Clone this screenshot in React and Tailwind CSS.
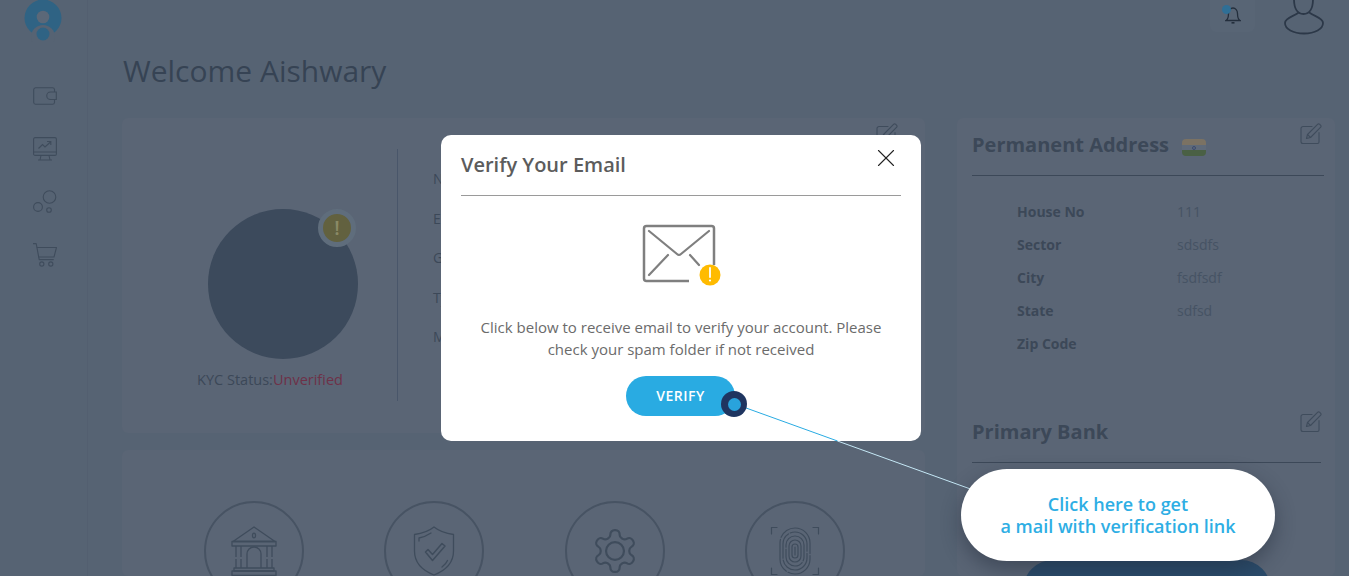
import { X } from 'lucide-react';

const addressRows = [
  ['House No', '111'],
  ['Sector', 'sdsdfs'],
  ['City', 'fsdfsdf'],
  ['State', 'sdfsd'],
  ['Zip Code', ''],
];

const profileLabels = ['Name', 'Email', 'Gender', 'Type', 'Mobile'];

const EditIcon = () => (
  <svg width="22" height="22" viewBox="0 0 22 22" fill="none" stroke="#3f4c5c" strokeWidth="1.1" strokeLinecap="round" strokeLinejoin="round">
    <path d="M12 3.5H3a2 2 0 0 0-2 2V18.5a2 2 0 0 0 2 2h14.5a1.5 1.5 0 0 0 1.5-1.5V9.5" />
    <path d="M6.5 15.5l1-4L17.8 1.2a1.2 1.2 0 0 1 1.7 0l1.2 1.2a1.2 1.2 0 0 1 0 1.7L10.5 14.5z" />
    <path d="M7.5 11.5l3 3" />
  </svg>
);

const WalletIcon = () => (
  <svg width="24" height="18" viewBox="0 0 24 18" fill="none" stroke="#3f4c5c" strokeWidth="1.1">
    <path d="M21.5 5V2.5A2 2 0 0 0 19.5.7H2.5A2 2 0 0 0 .7 2.5v13a2 2 0 0 0 1.8 1.8h17a2 2 0 0 0 2-1.8V12.500" />
    <path d="M23.300 5h-5.800a3.700 3.700 0 0 0 0 7.500h5.800z" />
  </svg>
);

const MonitorIcon = () => (
  <svg width="24" height="24" viewBox="0 0 24 24" fill="none" stroke="#3f4c5c" strokeWidth="1.1">
    <rect x=".6" y=".6" width="22.800" height="17.800" rx="1.500" />
    <path d="M.6 15h22.800M8 18.500l-1 4.500h10l-1-4.500M5 23h14" />
    <path d="M5.500 11.500l4-4 2.500 2.500 5.500-5M14 4.500h3.800v3.500" />
  </svg>
);

const BubblesIcon = () => (
  <svg width="24" height="24" viewBox="0 0 24 24" fill="none" stroke="#3f4c5c" strokeWidth="1.1">
    <circle cx="16.500" cy="7" r="6.300" />
    <circle cx="5" cy="17" r="4.400" />
    <circle cx="16" cy="20" r="2.300" />
  </svg>
);

const CartIcon = () => (
  <svg width="24" height="24" viewBox="0 0 24 24" fill="none" stroke="#3f4c5c" strokeWidth="1.1" strokeLinejoin="round">
    <path d="M0 .6h3.200l3 16h14.500" />
    <path d="M3.800 4.500H23.500l-2.500 9.500H5.700" />
    <circle cx="8.800" cy="21" r="2.100" />
    <circle cx="17.800" cy="21" r="2.100" />
  </svg>
);

const BankIcon = () => (
  <svg width="46" height="50" viewBox="0 0 46 50" fill="none" stroke="#3f4c5c" strokeWidth="1.300" strokeLinejoin="round">
    <path d="M23 1L2 15.500h42z" />
    <ellipse cx="23" cy="9.500" rx="1.500" ry="2.300" />
    <rect x="1" y="15.500" width="44" height="4.500" />
    <path d="M5 20v22M10 20v22M36 20v22M41 20v22" strokeDasharray="11 2 9" />
    <path d="M16 42V28a7 7 0 0 1 14 0v14" />
    <rect x="3" y="42" width="40" height="3" />
    <rect x="1" y="45" width="44" height="4.500" />
  </svg>
);

const ShieldIcon = () => (
  <svg width="42" height="50" viewBox="0 0 42 50" fill="none" stroke="#3f4c5c" strokeWidth="1.300" strokeLinecap="round" strokeLinejoin="round">
    <path d="M21 1c5 4 12 6.500 19.500 7.500V25c0 12-8 19.500-19.500 24C9.500 44.500 1.500 37 1.500 25V8.500C9 7.500 16 5 21 1z" />
    <path d="M6 12v3M6 12c5-1 9-3 12-5M29 41c2.500-2 4.500-4 5.500-6.500" />
    <path d="M12.500 26l2.500-2.500 4.500 5L29 17.500l3 2.500-12.500 14.500z" strokeWidth="1.500" />
  </svg>
);

const GearIcon = () => (
  <svg width="50" height="50" viewBox="0 0 24 24" fill="none" stroke="#3f4c5c" strokeWidth="1.050" strokeLinecap="round" strokeLinejoin="round">
    <path d="M12.220 2h-.44a2 2 0 0 0-2 2v.18a2 2 0 0 1-1 1.730l-.43.250a2 2 0 0 1-2 0l-.150-.080a2 2 0 0 0-2.730.730l-.220.380a2 2 0 0 0 .730 2.730l.150.100a2 2 0 0 1 1 1.720v.510a2 2 0 0 1-1 1.740l-.150.090a2 2 0 0 0-.730 2.730l.220.380a2 2 0 0 0 2.730.730l.150-.080a2 2 0 0 1 2 0l.430.250a2 2 0 0 1 1 1.730V20a2 2 0 0 0 2 2h.44a2 2 0 0 0 2-2v-.18a2 2 0 0 1 1-1.730l.430-.250a2 2 0 0 1 2 0l.150.080a2 2 0 0 0 2.730-.730l.220-.390a2 2 0 0 0-.730-2.730l-.150-.080a2 2 0 0 1-1-1.740v-.500a2 2 0 0 1 1-1.740l.150-.090a2 2 0 0 0 .730-2.730l-.220-.380a2 2 0 0 0-2.730-.730l-.150.080a2 2 0 0 1-2 0l-.430-.250a2 2 0 0 1-1-1.730V4a2 2 0 0 0-2-2z" />
    <circle cx="12" cy="12" r="4.300" />
  </svg>
);

const FingerprintIcon = () => (
  <svg width="50" height="50" viewBox="0 0 50 50" fill="none" stroke="#3f4c5c" strokeWidth="1.200" strokeLinecap="round">
    <path d="M7 1.500H1.500V8M43 1.500h5.500V8M7 48.500H1.500V42M43 48.500h5.500V42" />
    <rect x="10" y="2" width="30" height="46" rx="15" strokeDasharray="34 2" />
    <rect x="13" y="6" width="24" height="38" rx="12" strokeDasharray="26 2 40 2" />
    <rect x="16" y="10" width="18" height="30" rx="9" strokeDasharray="30 2" />
    <rect x="19" y="14" width="12" height="22" rx="6" />
    <rect x="22" y="18" width="6" height="14" rx="3" />
    <path d="M25 21v8" />
  </svg>
);

const MailWarningIcon = () => (
  <svg width="82" height="66" viewBox="0 0 82 66" fill="none">
    <path d="M49 58H6.500A2.500 2.500 0 0 1 4 55.500V5.500A2.500 2.500 0 0 1 6.500 3h65A2.500 2.500 0 0 1 74 5.500V42" stroke="#7f7f7f" strokeWidth="2.500" />
    <path d="M9 8l28 23a3 3 0 0 0 4 0L69 8M9 52l19-20M50 32l9 10" stroke="#7f7f7f" strokeWidth="2.200" strokeLinecap="round" />
    <circle cx="70" cy="52" r="10.500" fill="#ffbb00" />
    <path d="M70 45v9" stroke="#fff" strokeWidth="1.800" strokeLinecap="round" />
    <circle cx="70" cy="57.500" r="1.100" fill="#fff" />
  </svg>
);

const LogoIcon = () => (
  <svg className="-ml-[1px] shrink-0" width="38" height="42" viewBox="0 0 38 42">
    <circle cx="19" cy="18" r="18.500" fill="#2f6384" />
    <circle cx="19" cy="17" r="6.300" fill="#5b6878" />
    <circle cx="19" cy="37" r="12" fill="#566373" />
    <circle cx="19" cy="34" r="6.500" fill="#2f6384" />
  </svg>
);

const IndiaFlag = () => (
  <span className="flex h-[17px] w-[24px] flex-col overflow-hidden rounded-[4px]">
    <span className="h-[6px] bg-[#7b7263]" />
    <span className="flex h-[5px] items-center justify-center bg-[#5f6a79]">
      <span className="h-[4px] w-[4px] rounded-full border border-[#3a4a70]" />
    </span>
    <span className="h-[6px] bg-[#4a6044]" />
  </span>
);

const IconCircle = ({ children }) => (
  <div className="flex h-[100px] w-[100px] shrink-0 items-center justify-center rounded-full border-2 border-[#475363]">
    {children}
  </div>
);

const App = () => {
  return (
    <div className="relative flex h-[576px] w-[1349px] overflow-hidden bg-[#566373] font-['Open_Sans',sans-serif] text-[#3c4858]">
      {/* sidebar */}
      <aside className="flex w-[88px] shrink-0 flex-col items-center border-r border-[#535f70] bg-[#566373]">
        <LogoIcon />
        <div className="mt-[42px] flex flex-col items-center gap-[29px] pl-[2px]">
          <span className="flex h-[24px] items-center"><WalletIcon /></span>
          <span className="flex h-[24px] items-center"><MonitorIcon /></span>
          <span className="flex h-[24px] items-center"><BubblesIcon /></span>
          <span className="flex h-[24px] items-center"><CartIcon /></span>
        </div>
      </aside>

      {/* page */}
      <main className="flex min-w-0 flex-1 flex-col">
        <header className="flex h-[36px] justify-end gap-[29px] pr-[25px]">
          <div className="flex h-[32px] w-[45px] items-start justify-center rounded-b-md bg-[#586575] pt-[5px]">
            <span className="relative">
              <svg width="16" height="19" viewBox="0 0 16 19" fill="none" stroke="#232e3c" strokeWidth="1.300">
                <path d="M1 15.500c2.500-1.500 2.500-4 2.500-7a4.500 5.500 0 0 1 9 0c0 3 0 5.500 2.500 7z" />
                <path d="M6.500 17.800h3" strokeWidth="1.600" />
              </svg>
              <span className="absolute -left-[3px] top-0 h-[9px] w-[9px] rounded-full bg-[#2f6f96]" />
            </span>
          </div>
          <svg width="40" height="36" viewBox="0 0 40 36" fill="none" stroke="#2c3848" strokeWidth="1.800">
            <path d="M10 -1C10 8 13 14 19.500 14S29 8 29 -1" />
            <path d="M15 12C12 16 1 17 1 23 1 29 9 33.500 20 33.500S39 29 39 23C39 17 28 16 25 12" />
          </svg>
        </header>

        <h1 className="ml-[35px] mt-[16px] text-[30px] leading-[38px] text-[#364354]">Welcome Aishwary</h1>

        <div className="ml-[34px] mt-[28px] flex gap-[32px]">
          <div className="flex w-[803px] shrink-0 flex-col gap-[17px]">
            {/* profile card */}
            <section className="relative flex h-[315px] rounded-md bg-[#5a6575] pl-[31px]">
              <div className="mt-[31px] flex h-[252px] w-[245px] flex-col items-center border-r border-[#49566a] pl-[16px]">
                <div className="relative mt-[60px] h-[150px] w-[150px] rounded-full bg-[#3c4a5c]">
                  <span className="absolute left-[110px] top-0 flex h-[38px] w-[38px] items-center justify-center rounded-full border-[5px] border-[#5f6d7c] bg-[#62613f] text-[20px] font-semibold text-[#8a8a66]">!</span>
                </div>
                <p className="mr-[26px] mt-[10px] text-[14.500px] text-[#3c4858]">
                  KYC Status:<span className="text-[#6e3148]">Unverified</span>
                </p>
              </div>
              <ul className="ml-[35px] mt-[51px] flex flex-col gap-[19.500px] text-sm leading-[20px] text-[#3c4858]">
                {profileLabels.map((label) => (
                  <li key={label}>{label}</li>
                ))}
              </ul>
              <span className="absolute right-[27px] top-[5px]">
                <EditIcon />
              </span>
            </section>

            {/* settings card */}
            <section className="flex h-[126px] gap-[80.300px] rounded-md bg-[#5a6575] pl-[82px] pt-[51px]">
              <IconCircle><BankIcon /></IconCircle>
              <IconCircle><ShieldIcon /></IconCircle>
              <IconCircle><GearIcon /></IconCircle>
              <IconCircle><FingerprintIcon /></IconCircle>
            </section>
          </div>

          {/* right column */}
          <section className="relative h-[458px] w-[378px] shrink-0 rounded-md bg-[#5a6575] pl-[15px] pr-[11px]">
            <div className="flex h-[58px] items-end gap-[13px] border-b border-[#3c4858] pb-[17px]">
              <h2 className="text-[20px] font-bold leading-[27px] text-[#3c4858]">Permanent Address</h2>
              <span className="mb-[2px]"><IndiaFlag /></span>
            </div>
            <span className="absolute right-[13px] top-[5px]"><EditIcon /></span>

            <dl className="mt-[26px] flex flex-col gap-[13px] pl-[45px] text-sm leading-[20px]">
              {addressRows.map(([label, value]) => (
                <div key={label} className="flex">
                  <dt className="w-[160px] font-bold text-[#3c4858]">{label}</dt>
                  <dd className="text-[#465364]">{value}</dd>
                </div>
              ))}
            </dl>

            <h2 className="mt-[64px] text-[20px] font-bold leading-[27px] text-[#3c4858]">Primary Bank</h2>
            <div className="mr-[3px] mt-[17px] border-b border-[#3c4858]" />
            <span className="absolute right-[13px] top-[293px]"><EditIcon /></span>
          </section>
        </div>
      </main>

      {/* button behind the callout */}
      <div className="absolute left-[1023px] top-[560px] h-[60px] w-[248px] rounded-full bg-[#2a4b6a]" />

      {/* modal */}
      <div className="absolute left-[441px] top-[135px] h-[306px] w-[480px] rounded-[10px] bg-white px-[20px]">
        <div className="flex h-[61px] items-start justify-between border-b border-[#9a9a9a] pt-[16px]">
          <h3 className="text-[20px] font-semibold leading-[28px] text-[#5c5c5c]">Verify Your Email</h3>
          <X className="-mt-[8px]" size={30} strokeWidth={0.900} color="#222" />
        </div>
        <div className="mt-[27px] flex justify-center pr-[1px]">
          <MailWarningIcon />
        </div>
        <p className="mx-auto mt-[27px] w-[420px] text-center text-[15px] leading-[22px] text-[#6b6b6b]">
          Click below to receive email to verify your account. Please check your spam folder if not received
        </p>
        <button className="ml-[165px] mt-[16px] block h-[40px] w-[109px] rounded-full bg-[#29abe2] text-sm font-semibold tracking-[0.5px] text-white">
          VERIFY
        </button>
      </div>

      {/* pointer line and dot */}
      <svg className="absolute inset-0" width="1349" height="576" fill="none">
        <line x1="735" y1="404" x2="837.500" y2="441" stroke="#29abe2" strokeWidth="1" />
        <line x1="837.500" y1="441" x2="976" y2="491" stroke="#c5e8f6" strokeWidth="1" />
      </svg>
      <span className="absolute left-[721px] top-[391px] flex h-[26px] w-[26px] items-center justify-center rounded-full bg-[#1f3560]">
        <span className="h-[13px] w-[13px] rounded-full bg-[#29a3dc]" />
      </span>

      {/* callout */}
      <div className="absolute left-[961px] top-[469px] flex h-[92px] w-[314px] items-center justify-center rounded-[46px] bg-white text-center text-[18px] font-semibold leading-[22px] text-[#2eaee4] shadow-[0_8px_20px_rgba(30,40,55,0.45)]">
        <p>Click here to get<br />a mail with verification link</p>
      </div>
    </div>
  );
};

export default App;
